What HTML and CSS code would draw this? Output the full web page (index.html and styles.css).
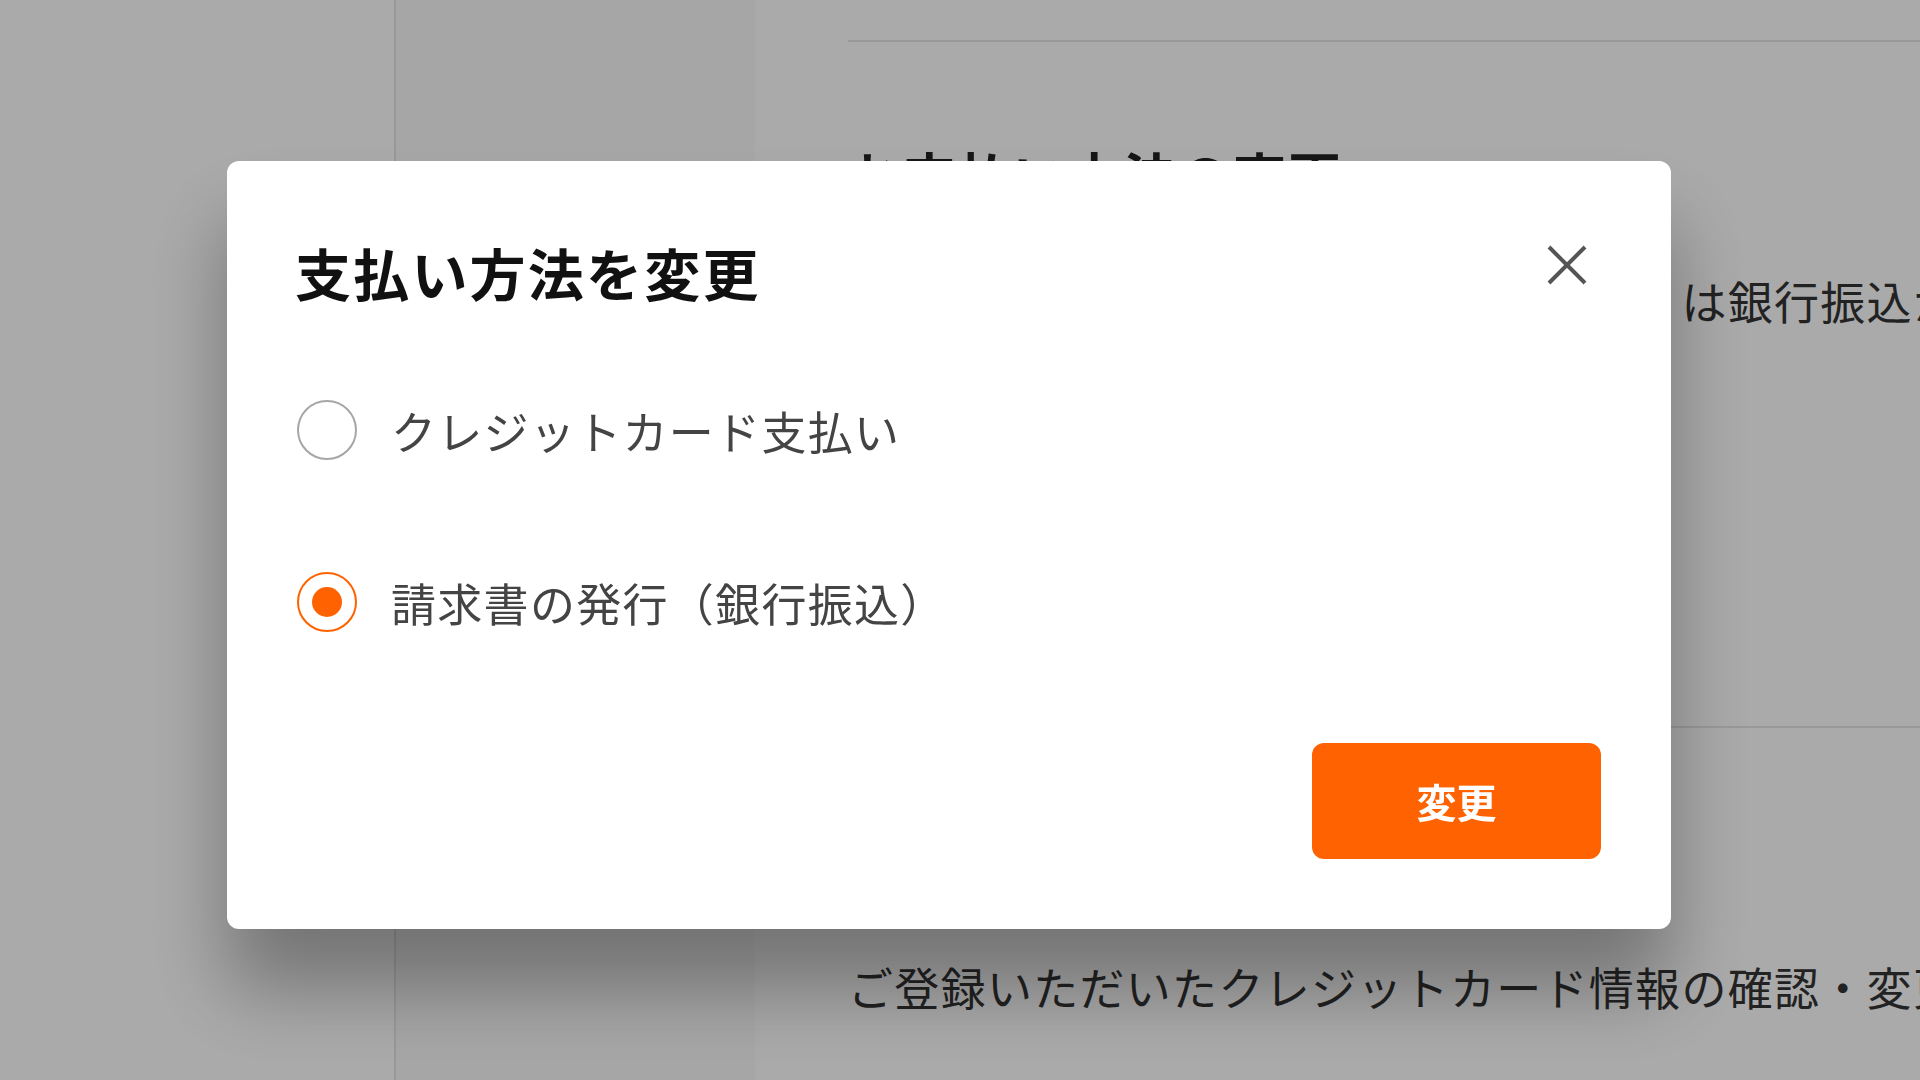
FILE: index.html
```html
<!DOCTYPE html>
<html lang="ja">
<head>
<meta charset="utf-8">
<title>支払い方法を変更</title>
<link rel="stylesheet" href="styles.css">
</head>
<body>
<div class="page">
  <aside class="sidebar"></aside>
  <nav class="subnav"></nav>
  <main class="main">
    <section class="section section-first">
      <h2 class="section-title">お支払い方法の変更</h2>
      <p class="section-text">ご利用中のお支払い方法（請求書払い）は銀行振込からクレジットカード払いへ変更できます。</p>
      <button class="section-btn" type="button">支払い方法を変更</button>
    </section>
    <section class="section">
      <h2 class="section-title">クレジットカード情報</h2>
      <p class="section-text">ご登録いただいたクレジットカード情報の確認・変更はこちらから行えます。</p>
    </section>
  </main>
</div>

<div class="overlay">
  <div class="modal" role="dialog" aria-labelledby="modal-title">
    <div class="modal-header">
      <h1 class="modal-title" id="modal-title">支払い方法を変更</h1>
      <button class="close" type="button" aria-label="閉じる">
        <svg width="40" height="40" viewBox="0 0 40 40"><path d="M2 2 L38 38 M38 2 L2 38" stroke="#555" stroke-width="4" fill="none"/></svg>
      </button>
    </div>
    <div class="options">
      <label class="option"><span class="radio"></span><span class="option-text">クレジットカード支払い</span></label>
      <label class="option"><span class="radio checked"></span><span class="option-text">請求書の発行（銀行振込）</span></label>
    </div>
    <div class="modal-footer">
      <button class="submit" type="button">変更</button>
    </div>
  </div>
</div>
</body>
</html>
```
FILE: styles.css
```css
html, body {
  margin: 0;
  height: 100%;
  overflow: hidden;
}
body {
  font-family: "Noto Sans CJK JP", "Noto Sans", sans-serif;
  background: #fff;
  color: #333;
}
.page {
  display: flex;
  height: 1080px;
}
.sidebar {
  width: 394px;
  flex: none;
  border-right: 2px solid #e6e6e6;
}
.subnav {
  width: 359px;
  flex: none;
  background: #fafafa;
}
.main {
  flex: 1;
  min-width: 0;
  padding: 40px 0 0 93px;
}
.section {
  border-top: 2px solid #e6e6e6;
}
.section-first {
  padding-bottom: 214px;
}
.section-title {
  margin: 94px 0 0;
  font-size: 53px;
  letter-spacing: 2px;
  line-height: 78px;
  font-weight: 700;
  color: #222;
  white-space: nowrap;
}
.section-text {
  margin: 52px 0 0;
  font-size: 45px;
  letter-spacing: 1.3px;
  line-height: 70px;
  color: #333;
  white-space: nowrap;
}
.section-btn {
  display: block;
  margin-top: 60px;
  width: 400px;
  height: 116px;
  border: 2px solid #ff6200;
  border-radius: 12px;
  background: #fff;
  color: #ff6200;
  font: 700 40px "Noto Sans CJK JP", sans-serif;
}

.overlay {
  position: fixed;
  inset: 0;
  background: rgba(0, 0, 0, 0.333);
  padding: 161px 0 0 227px;
  box-sizing: border-box;
}
.modal {
  width: 1444px;
  height: 768px;
  box-sizing: border-box;
  background: #fff;
  border-radius: 12px;
  padding: 70px;
  box-shadow: 0 60px 80px rgba(0, 0, 0, 0.32);
  display: flex;
  flex-direction: column;
}
.modal-header {
  display: flex;
  justify-content: space-between;
  align-items: flex-start;
}
.modal-title {
  margin: 0 0 0 -2px;
  font-size: 56px;
  letter-spacing: 2.2px;
  line-height: 81px;
  font-weight: 700;
  color: #111;
}
.close {
  width: 68px;
  height: 68px;
  border: none;
  background: none;
  padding: 0;
  display: flex;
  align-items: center;
  justify-content: center;
}
.options {
  margin-top: 88px;
  display: flex;
  flex-direction: column;
  gap: 112px;
}
.option {
  display: flex;
  align-items: center;
  gap: 34px;
  height: 60px;
  font-size: 45px;
  letter-spacing: 1.3px;
  color: #444;
}
.radio {
  width: 60px;
  height: 60px;
  box-sizing: border-box;
  border-radius: 50%;
  border: 2px solid #a6a6a6;
  flex: none;
  display: flex;
  align-items: center;
  justify-content: center;
}
.radio.checked {
  border-color: #ff6200;
}
.radio.checked::after {
  content: "";
  width: 30px;
  height: 30px;
  border-radius: 50%;
  background: #ff6200;
}
.modal-footer {
  margin-top: auto;
  display: flex;
  justify-content: flex-end;
}
.submit {
  width: 289px;
  height: 116px;
  border: none;
  border-radius: 12px;
  background: #ff6200;
  color: #fff;
  font: 700 40px "Noto Sans CJK JP", sans-serif;
  padding: 0;
}
```
